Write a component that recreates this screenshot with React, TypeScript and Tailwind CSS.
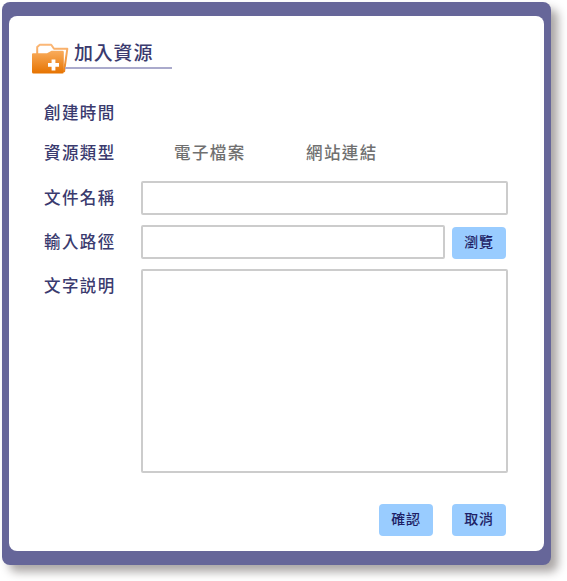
import React from "react";

function FolderIcon() {
  return (
    <svg width="38" height="32" viewBox="0 0 38 32" className="shrink-0">
      <defs>
        <linearGradient id="folder" x1="0" y1="0" x2="0" y2="1">
          <stop offset="0" stopColor="#f9ac5c" />
          <stop offset="1" stopColor="#e67300" />
        </linearGradient>
        <linearGradient id="rim" x1="0" y1="0" x2="0" y2="1">
          <stop offset="0" stopColor="#fbb878" />
          <stop offset="1" stopColor="#ea8018" />
        </linearGradient>
      </defs>
      <path
        d="M5.2 12V5L7.8 2.8H19.2L22 6.8H35.3L32 30"
        fill="#fff"
        stroke="url(#rim)"
        strokeWidth="2"
        strokeLinejoin="round"
      />
      <path
        d="M0 12.3Q0 11.3 1 11.3H15L19.5 8.8H30.5Q31.8 8.8 31.8 10V30Q31.8 31.5 30.3 31.5H1.5Q0 31.5 0 30Z"
        fill="url(#folder)"
      />
      <path d="M19.6 17.4h3.8v3.6h3.6v3.8h-3.6v3.6h-3.8v-3.6h-3.6v-3.8h3.6z" fill="#fff" />
    </svg>
  );
}

function Label({ children }: { children: React.ReactNode }) {
  return (
    <span className="w-[97px] shrink-0 text-[16.5px] leading-[32px] font-medium tracking-[1.4px] text-[#3a3a6e]">
      {children}
    </span>
  );
}

function Button({ children }: { children: React.ReactNode }) {
  return (
    <button className="h-[32px] w-[54px] shrink-0 rounded-[4px] bg-[#99ccff] pb-[3px] text-[14px] leading-[29px] font-medium tracking-[0.8px] text-[#1f1f66]">
      {children}
    </button>
  );
}

export default function App() {
  return (
    <div className="h-[581px] w-[567px] overflow-hidden bg-white pt-[2px] pl-[2px] font-['Noto_Sans_CJK_TC',sans-serif]">
      <div className="h-[563px] w-[549px] rounded-[8px] bg-[#666699] px-[7px] pt-[14px] shadow-[7px_7px_10px_rgba(35,24,21,0.38)]">
        <main className="h-[535px] w-[535px] rounded-[8px] bg-white pl-[35px]">
          <header className="-ml-[12px] flex h-[80px] pt-[26px]">
            <FolderIcon />
            <h1 className="-ml-[5px] h-[27px] w-[107px] border-b-2 border-[#aaaacc] pl-[9px] text-[19px] leading-[20px] font-medium tracking-[0.8px] text-[#3a3a6e]">
              加入資源
            </h1>
          </header>
          <div className="flex h-[40px]">
            <Label>創建時間</Label>
          </div>
          <div className="flex h-[45px] text-[16.5px] leading-[32px] font-medium tracking-[1.4px] text-[#707070]">
            <Label>資源類型</Label>
            <span className="ml-[33px] w-[132px]">電子檔案</span>
            <span>網站連結</span>
          </div>
          <div className="flex h-[44px]">
            <Label>文件名稱</Label>
            <input className="h-[34px] w-[367px] rounded-[2px] border-2 border-[#cccccc] bg-white outline-none" />
          </div>
          <div className="flex h-[44px]">
            <Label>輸入路徑</Label>
            <input className="mr-[7px] h-[34px] w-[304px] rounded-[2px] border-2 border-[#cccccc] bg-white outline-none" />
            <div className="pt-[2px]">
              <Button>瀏覽</Button>
            </div>
          </div>
          <div className="flex h-[204px]">
            <Label>文字説明</Label>
            <textarea className="h-[204px] w-[367px] resize-none rounded-[2px] border-2 border-[#cccccc] bg-white outline-none" />
          </div>
          <footer className="mt-[31px] mr-[38px] flex justify-end gap-[19px]">
            <Button>確認</Button>
            <Button>取消</Button>
          </footer>
        </main>
      </div>
    </div>
  );
}
